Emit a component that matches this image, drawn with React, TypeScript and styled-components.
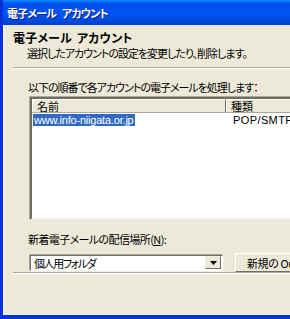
import React from "react";
import styled, { createGlobalStyle } from "styled-components";

const GlobalStyle = createGlobalStyle`
  html, body {
    margin: 0;
    padding: 0;
    overflow: hidden;
    background: #ece9d8;
  }
  body {
    font-family: "Noto Sans CJK JP", "Liberation Sans", sans-serif;
    font-feature-settings: "palt";
    font-size: 11px;
    letter-spacing: -1px;
    color: #000000;
  }
`;

export default function App() {
  return (
    <>
      <GlobalStyle />
      <Window>
        <TitleBar>電子メール アカウント</TitleBar>
        <Body>
          <Header>
            <HeaderTitle>電子メール アカウント</HeaderTitle>
            <HeaderText>選択したアカウントの設定を変更したり、削除します。</HeaderText>
          </Header>
          <Separator />
          <Content>
            <Label>以下の順番で各アカウントの電子メールを処理します：</Label>
            <ListBox>
              <ListHead>
                <HeadCell $width={194}>名前</HeadCell>
                <HeadCell $width={120}>種類</HeadCell>
              </ListHead>
              <Row>
                <Cell $width={194}>
                  <Selected>www.info-niigata.or.jp</Selected>
                </Cell>
                <Cell $width={120}>POP/SMTP (既定)</Cell>
              </Row>
            </ListBox>
            <Label className="second">
              新着電子メールの配信場所(<u>N</u>):
            </Label>
            <ComboRow>
              <Combo>
                <ComboText>個人用フォルダ</ComboText>
                <ComboArrow>
                  <svg width="7" height="4" viewBox="0 0 7 4">
                    <path d="M0 0h7L3.5 4z" fill="#000" />
                  </svg>
                </ComboArrow>
              </Combo>
              <Button>新規の Outlook データ ファイル(F)...</Button>
            </ComboRow>
          </Content>
          <Separator />
        </Body>
      </Window>
    </>
  );
}

const Window = styled.div`
  display: flex;
  flex-direction: column;
  width: 290px;
  height: 319px;
  box-sizing: border-box;
  border-left: 3px solid #0831d9;
  border-bottom: 4px solid #0831d9;
  box-shadow: inset 1px 0 0 #3c7df3, inset 0 -1px 0 #3c7df3;
  overflow: hidden;
`;

const TitleBar = styled.div`
  height: 25px;
  flex-shrink: 0;
  display: flex;
  align-items: center;
  margin-left: -3px;
  padding-left: 7px;
  background: linear-gradient(
    to bottom,
    #0997ff 0px,
    #0053ee 3px,
    #0050ee 8px,
    #0055f4 14px,
    #0047d8 22px,
    #003dd7 25px
  );
  color: #ffffff;
  font-weight: bold;
  font-size: 11px;
  letter-spacing: -0.8px;
  word-spacing: 4px;
  text-shadow: 1px 1px 0 #0a1883;
  white-space: pre;
`;

const Body = styled.div`
  flex: 1;
  display: flex;
  flex-direction: column;
  background: #ece9d8;
  border-left: 1px solid #f4f3ee;
`;

const Header = styled.div`
  padding: 5px 0 0 9px;
  height: 37px;
`;

const HeaderTitle = styled.div`
  font-weight: bold;
  font-size: 12px;
  letter-spacing: 0.2px;
  word-spacing: 2px;
  line-height: 16px;
  white-space: pre;
`;

const HeaderText = styled.div`
  padding-left: 14px;
  line-height: 15px;
  white-space: nowrap;
`;

const Separator = styled.div`
  margin-left: 9px;
  height: 0;
  border-top: 1px solid #aca899;
  border-bottom: 1px solid #ffffff;
`;

const Content = styled.div`
  padding: 11px 0 0 24px;
  width: 340px;
`;

const Label = styled.div`
  line-height: 15px;
  white-space: nowrap;
  &.second {
    margin-top: 12px;
    letter-spacing: -0.6px;
  }
  u {
    text-decoration: underline;
  }
`;

const ListBox = styled.div`
  margin-top: 2px;
  margin-left: 2px;
  height: 123px;
  box-sizing: border-box;
  background: #ffffff;
  border-top: 2px solid #716f64;
  border-left: 2px solid #716f64;
  border-bottom: 2px solid #f1efe2;
  box-shadow: -1px -1px 0 #aca899;
`;

const ListHead = styled.div`
  display: flex;
  height: 14px;
`;

const HeadCell = styled.div<{ $width: number }>`
  width: ${(p) => p.$width}px;
  flex-shrink: 0;
  box-sizing: border-box;
  padding-left: 4px;
  line-height: 12px;
  letter-spacing: 0;
  background: #ece9d8;
  border-top: 1px solid #ffffff;
  border-left: 1px solid #ffffff;
  border-right: 1px solid #716f64;
  border-bottom: 1px solid #aca899;
  white-space: nowrap;
`;

const Row = styled.div`
  display: flex;
  height: 12px;
  margin-top: 1px;
`;

const Cell = styled.div<{ $width: number }>`
  width: ${(p) => p.$width}px;
  flex-shrink: 0;
  padding-left: 1px;
  line-height: 12px;
  white-space: nowrap;
  font-family: "Liberation Sans", sans-serif;
  font-size: 11px;
  letter-spacing: 0;
  & + & {
    padding-left: 6px;
    letter-spacing: 0.4px;
  }
`;

const Selected = styled.span`
  display: inline-block;
  background: #316ac5;
  color: #ffffff;
  padding: 0 1px;
  line-height: 12px;
  letter-spacing: -0.2px;
`;

const ComboRow = styled.div`
  display: flex;
  align-items: center;
  gap: 12px;
  margin-top: 6px;
  margin-left: 2px;
`;

const Combo = styled.div`
  width: 193px;
  height: 16px;
  flex-shrink: 0;
  box-sizing: border-box;
  display: flex;
  align-items: center;
  background: #ffffff;
  border-top: 1px solid #716f64;
  border-left: 1px solid #716f64;
  border-right: 1px solid #ffffff;
  border-bottom: 1px solid #ffffff;
  box-shadow: -1px -1px 0 #aca899, 1px 1px 0 #f1efe2;
`;

const ComboText = styled.div`
  flex: 1;
  padding-left: 3px;
  line-height: 14px;
  letter-spacing: -1.4px;
  white-space: nowrap;
`;

const ComboArrow = styled.div`
  width: 16px;
  height: 13px;
  margin-right: 1px;
  box-sizing: border-box;
  display: flex;
  align-items: center;
  justify-content: center;
  background: #ece9d8;
  border-top: 1px solid #f1efe2;
  border-left: 1px solid #f1efe2;
  border-right: 1px solid #716f64;
  border-bottom: 1px solid #716f64;
`;

const Button = styled.div`
  height: 19px;
  flex-shrink: 0;
  box-sizing: border-box;
  display: flex;
  align-items: center;
  padding: 0 10px 0 11px;
  background: #ece9d8;
  border-top: 1px solid #ffffff;
  border-left: 1px solid #ffffff;
  border-right: 1px solid #716f64;
  border-bottom: 1px solid #716f64;
  box-shadow: 1px 1px 0 #404040;
  letter-spacing: -0.4px;
  white-space: nowrap;
`;
